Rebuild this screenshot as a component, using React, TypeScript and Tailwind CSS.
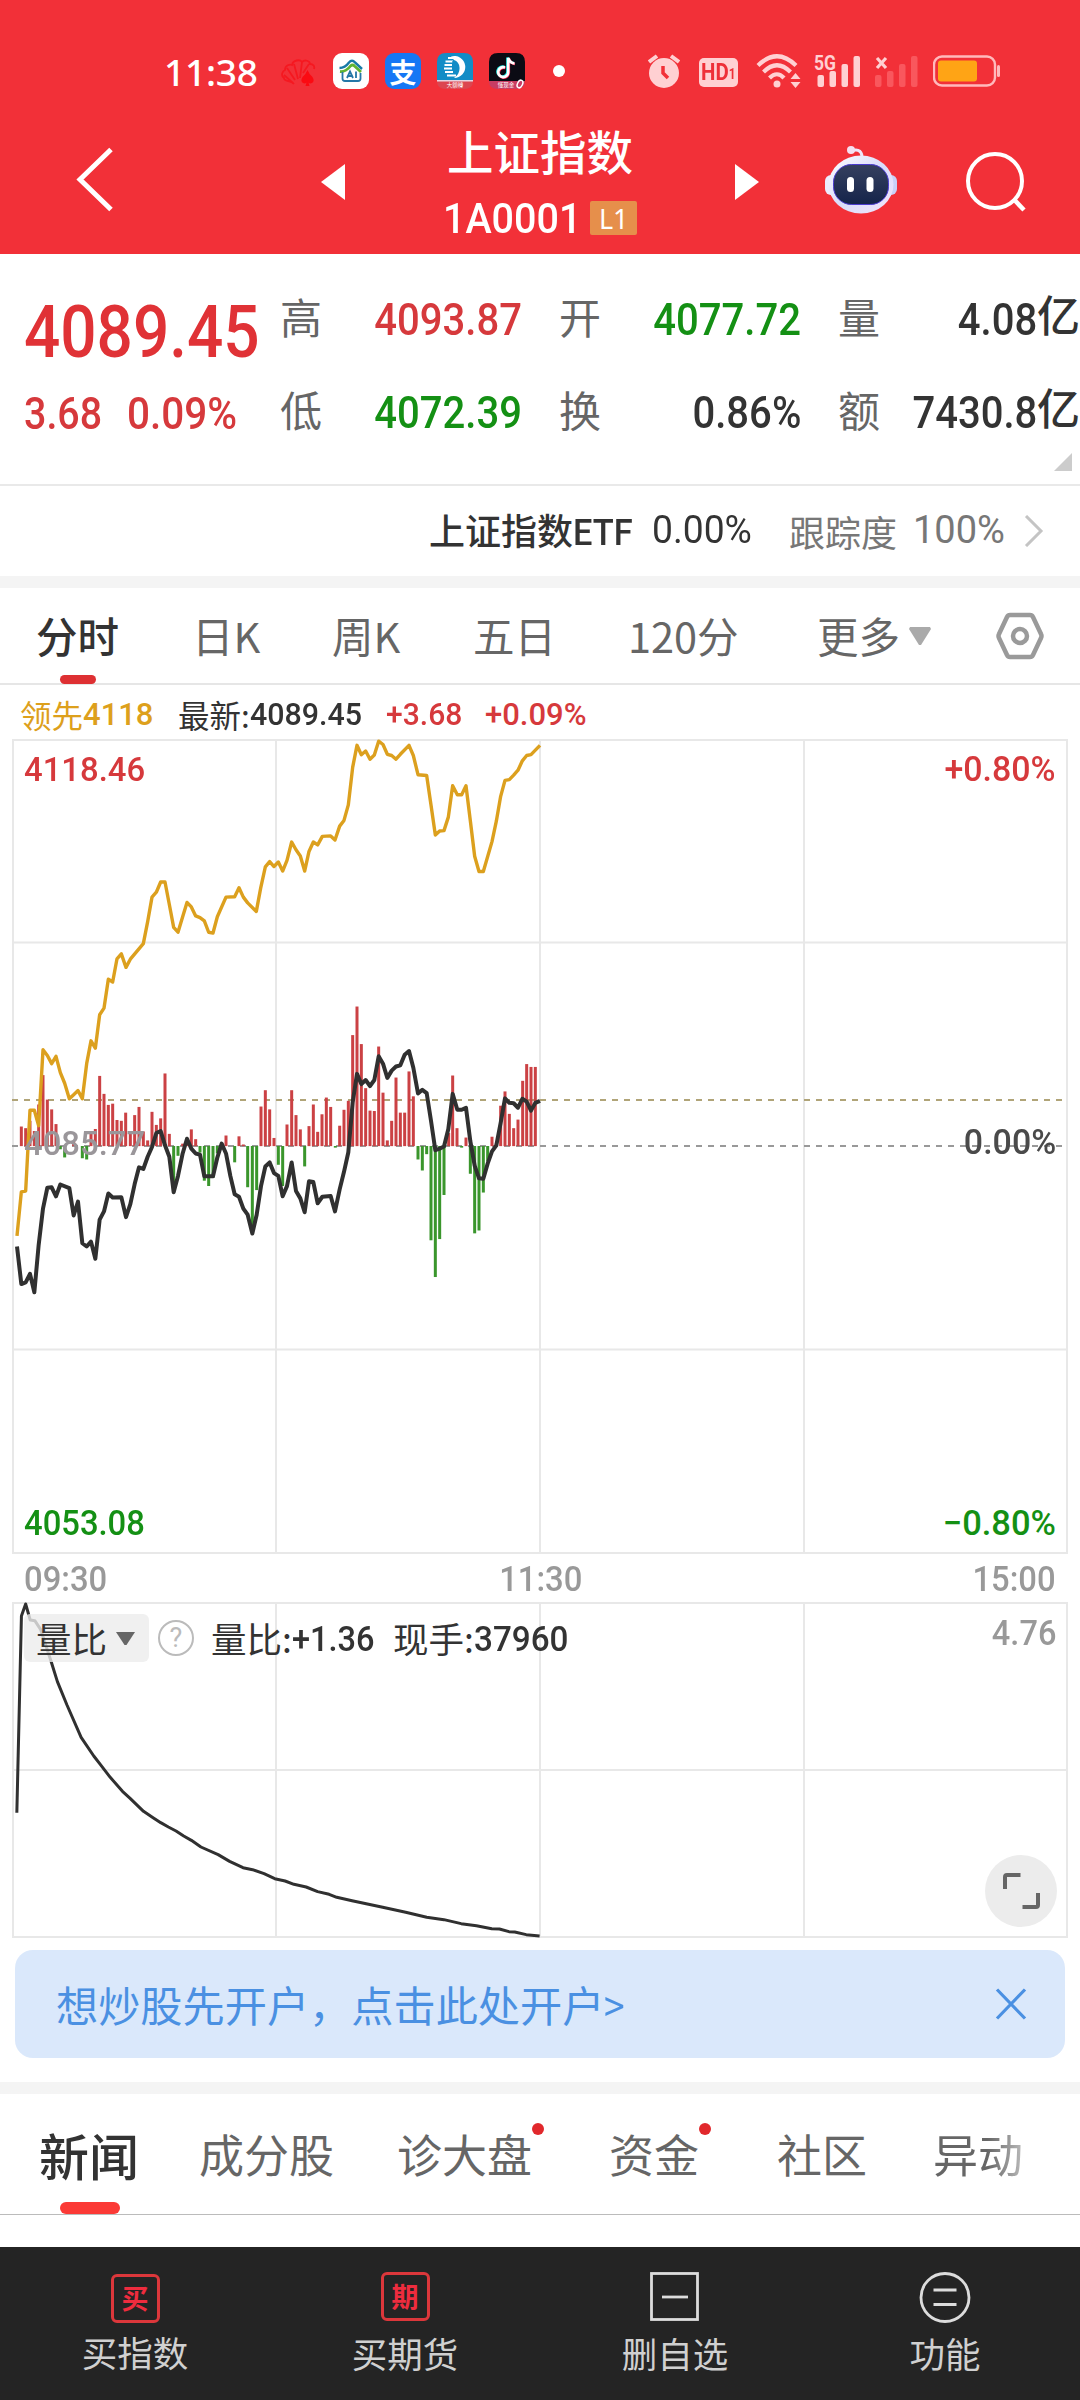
import React from "react";

const LEAD =
  "51,1362 64,1254 77,1252 90,1054 103,1054 116,1092 129,906 142,920 155,940 168,922 181,962 194,988 208,1026 221,1016 234,1006 247,1026 260,940 273,884 286,902 299,820 312,804 325,733 338,740 351,683 364,671 378,704 391,684 430,646 443,592 456,532 469,520 482,495 495,495 508,550 521,606 534,618 548,580 561,545 574,556 587,578 600,582 613,590 626,618 639,620 652,580 678,532 704,531 717,509 730,532 743,546 769,567 782,510 796,458 809,445 822,457 835,446 848,468 861,442 875,397 888,416 901,431 914,468 927,420 940,397 953,404 967,383 992,382 1005,392 1019,358 1032,344 1045,306 1058,214 1071,160 1084,183 1097,174 1110,194 1123,184 1136,150 1149,158 1162,182 1175,185 1188,194 1201,182 1227,160 1240,185 1254,232 1280,234 1293,306 1306,380 1319,370 1332,369 1345,336 1358,259 1372,281 1385,281 1398,259 1411,345 1424,432 1437,469 1450,469 1476,396 1489,346 1502,285 1515,246 1528,244 1541,233 1554,221 1567,198 1580,185 1593,183 1620,160";

const INDEX =
  "51,1388 64,1480 77,1476 90,1455 103,1500 116,1384 129,1295 142,1244 155,1243 168,1265 181,1236 208,1245 221,1312 234,1278 247,1380 260,1388 273,1376 286,1418 299,1322 312,1302 325,1258 338,1268 364,1267 378,1316 391,1284 404,1235 417,1194 430,1198 443,1168 456,1144 469,1110 482,1105 495,1140 508,1168 521,1255 534,1215 548,1160 561,1124 574,1148 587,1160 600,1163 613,1216 639,1216 652,1170 665,1136 678,1160 691,1215 704,1260 717,1266 730,1295 743,1310 757,1356 770,1310 783,1240 796,1192 809,1182 822,1208 835,1215 848,1265 861,1240 875,1182 888,1252 901,1270 914,1304 927,1228 940,1230 953,1282 967,1266 992,1264 1005,1302 1019,1248 1032,1205 1045,1157 1058,1035 1071,965 1084,990 1097,980 1110,995 1123,980 1136,922 1149,940 1162,975 1175,957 1188,947 1201,944 1214,918 1227,909 1240,950 1254,1013 1267,1004 1280,1012 1293,1080 1306,1152 1319,1148 1332,1143 1345,1100 1358,1014 1372,1053 1385,1053 1398,1048 1411,1130 1424,1190 1437,1221 1450,1222 1463,1185 1476,1155 1489,1140 1502,1085 1515,1025 1528,1036 1541,1037 1554,1048 1567,1026 1580,1033 1593,1055 1606,1036 1620,1031";

const BARS: [number, number][] = [
  [64, 1094], [77, 1098], [90, 1080], [103, 1105], [116, 1040], [129, 968], [142, 1028], [155, 1052], [168, 1088],
  [181, 1150], [194, 1170], [221, 1130], [247, 1172], [260, 1175], [273, 1105], [286, 1100], [299, 970], [312, 1014],
  [325, 1041], [338, 1038], [351, 1078], [364, 1080], [377, 1060], [391, 1105], [404, 1066], [417, 1046], [430, 1106],
  [443, 1128], [456, 1058], [469, 1090], [482, 1074], [495, 964], [508, 1112], [521, 1242], [534, 1166], [548, 1136],
  [561, 1124], [574, 1101], [587, 1125], [600, 1158], [613, 1227], [626, 1240], [639, 1220], [652, 1160], [665, 1136],
  [678, 1116], [704, 1182], [717, 1118], [730, 1138], [743, 1243], [757, 1340], [770, 1250], [783, 1045], [796, 1005],
  [809, 1052], [822, 1122], [835, 1188], [848, 1240], [861, 1089], [875, 1005], [888, 1066], [901, 1101], [914, 1192],
  [927, 1093], [940, 1040], [953, 1107], [966, 1064], [979, 1023], [992, 1046], [1006, 1146], [1019, 1092],
  [1032, 1053], [1045, 1031], [1058, 870], [1071, 800], [1084, 892], [1097, 1000], [1110, 1055], [1123, 1056],
  [1136, 898], [1149, 1011], [1162, 1128], [1175, 1080], [1188, 974], [1201, 1060], [1214, 1060], [1227, 959],
  [1240, 1020], [1254, 1175], [1267, 1202], [1280, 1162], [1293, 1373], [1306, 1463], [1319, 1370], [1332, 1262],
  [1346, 1110], [1358, 969], [1371, 1098], [1385, 1146], [1398, 1121], [1411, 1210], [1424, 1356], [1437, 1349],
  [1450, 1256], [1463, 1180], [1476, 1119], [1489, 1135], [1502, 1043], [1515, 1008], [1528, 1063], [1541, 1098],
  [1554, 1077], [1568, 982], [1580, 941], [1593, 948], [1606, 948],
];

/* Volume-ratio curve on a 2.613 x 3 sub-pixel grid. */
const RATIO =
  "44,938 56,348 67,312 79,360 91,362 106,388 134,486 150,545 175,615 212,712 245,768 262,793 288,832 320,874 340,895 375,934 400,953 420,968 440,981 460,993 480,1008 500,1021 525,1041 570,1064 600,1084 635,1103 660,1109 690,1121 718,1136 745,1143 768,1153 800,1161 830,1175 860,1183 880,1192 920,1202 1000,1222 1060,1237 1115,1252 1160,1259 1205,1271 1245,1277 1285,1286 1305,1287 1330,1295 1345,1296 1375,1304 1410,1308";

const NUM = "font-['Roboto','Noto_Sans_CJK_SC',sans-serif] font-medium leading-none whitespace-nowrap";

function StatusBar() {
  return (
    <div className="flex h-[112px] items-center pt-[30px]">
      <span className="ml-[164px] w-[117px] font-['Noto_Sans',sans-serif] text-[37px] font-medium leading-none tracking-[-0.2px] text-white">
        11:38
      </span>
      <svg className="mt-[4px] h-[30px] w-[36px]" viewBox="0 0 36 30" fill="none" stroke="#f51820" strokeWidth="1.800">
        <path d="M13 26C10 22 3 24 3 20C-1 17 2 13 4 12C4 7 9 6 11 7C12 2 19 1 21 4C24 1 29 3 29 6C32 6 34 8 33 11M12 25L3 17M14 22L6 10M17 21L13 6M19 20L21 4M22 15L28 6" />
        <path d="M26.500 12Q28 16 31.500 19Q34 23 31 25Q29 26 27.500 24.500L28.500 28H24.500L25.500 24.500Q24 26 22 25Q19 23 21.500 19Q25 16 26.500 12Z" fill="#fb0a12" stroke="none" />
      </svg>
      <svg className="ml-[16px] size-[36px]" viewBox="0 0 36 36">
        <rect width="36" height="36" rx="9" fill="#fff" />
        <path d="M6.500 15Q12 15 16 9.500Q19 6 22 9.500L29 16" fill="none" stroke="#1779a8" strokeWidth="2.400" />
        <path d="M7 18.500Q13 19 17.500 13Q19.500 11 21.500 13L28 19" fill="none" stroke="#5fb332" strokeWidth="2.800" />
        <path d="M9.500 19V25.500Q9.500 28 12 28H25Q27.500 28 27.500 25.500V20" fill="none" stroke="#2577a8" strokeWidth="1.800" />
        <path d="M14 25L17 18.500L20 25M15.500 23H19M23 18.500V25" fill="none" stroke="#2577a8" strokeWidth="1.800" />
      </svg>
      <span className="ml-[16px] flex size-[36px] items-center justify-center rounded-[9px] bg-[#1677f5] font-['Noto_Sans_CJK_SC',sans-serif] text-[27px] font-bold leading-none text-white">
        支
      </span>
      <svg className="ml-[16px] size-[36px]" viewBox="0 0 36 36">
        <path d="M0 28V9Q0 0 9 0H27Q36 0 36 9V28Z" fill="#128cc6" />
        <path d="M11 5H20M8.500 8.500H16M7.500 12H15M7 15.500H15M8 19H16M10 22.500H19" stroke="#fff" strokeWidth="1.900" />
        <path d="M14 3.500A11 11 0 1 1 17 25Q23 21 22.500 14.500Q22 8.500 17 7Z" fill="#fff" />
        <path d="M15 8Q22 9 21 20L17.500 20.500Z" fill="#128cc6" />
        <path d="M0 28H36Q36 36 27 36H9Q0 36 0 28Z" fill="#dc4650" />
        <rect y="27" width="36" height="1.500" fill="#e8d6e0" />
        <text x="18" y="33.500" textAnchor="middle" fill="#fff" fontSize="5.500" fontFamily="Noto Sans CJK SC">大額轉</text>
      </svg>
      <svg className="ml-[16px] size-[36px]" viewBox="0 0 36 36">
        <path d="M0 28V9Q0 0 9 0H27Q36 0 36 9V28Z" fill="#0b0b14" />
        <g fill="none" strokeWidth="2.600">
          <path d="M15.500 14A5 5 0 1 0 18.500 18.500V4.500Q20 9.500 25 10" stroke="#25f4ee" />
          <path d="M16.500 15A5 5 0 1 0 19.800 19.500V5.500Q21.500 10.500 26 11" stroke="#fe2c55" />
          <path d="M16 14.500A5 5 0 1 0 19.200 19V5Q20.800 10 25.500 10.500" stroke="#fff" />
        </g>
        <path d="M0 28H36Q36 36 27 36H9Q0 36 0 28Z" fill="#c83c63" />
        <text x="17" y="33.500" textAnchor="middle" fill="#fff" fontSize="5.500" fontFamily="Noto Sans CJK SC">懂现金</text>
        <ellipse cx="31" cy="31" rx="2.500" ry="4" fill="none" stroke="#fff" strokeWidth="1.500" transform="rotate(25 31 31)" />
      </svg>
      <span className="ml-[28px] size-[12px] rounded-full bg-white" />
      <svg className="ml-[83px] h-[36px] w-[32px]" viewBox="0 0 32 36">
        <circle cx="16" cy="20" r="15" fill="#ffd0d2" />
        <path d="M1 9L9 3M31 9L23 3" stroke="#ffd0d2" strokeWidth="4" />
        <path d="M15 13V20L20 25" fill="none" stroke="#f23038" strokeWidth="3.500" />
      </svg>
      <span className="ml-[19px] mt-[2px] flex h-[29px] w-[39px] items-center justify-center rounded-[5px] bg-[#ffd0d2] font-['Roboto',sans-serif] text-[#ee3038]">
        <span className="flex scale-x-[0.85] items-end text-[24px] font-bold leading-[20px]">
          HD<span className="text-[14px] leading-[15px]">1</span>
        </span>
      </span>
      <svg className="ml-[18px] h-[36px] w-[46px]" viewBox="0 0 46 36">
        <g fill="none" stroke="#ffd0d2" strokeWidth="4.200">
          <path d="M2 12.500Q21 -6 40 12.500" />
          <path d="M7.500 19Q21 5.500 34.500 19" />
          <path d="M13.500 25Q21 17.500 28 25" />
        </g>
        <circle cx="21" cy="31" r="3.500" fill="#ffd0d2" />
        <path d="M34.500 26L39.500 20L44.500 26ZM34.500 29L39.500 35L44.500 29Z" fill="#ffd0d2" />
      </svg>
      <svg className="ml-[12px] h-[36px] w-[48px]" viewBox="0 0 48 36" fill="#ffd0d2">
        <text x="0" y="17" fontSize="20" fontWeight="700" textLength="22" lengthAdjust="spacingAndGlyphs" fontFamily="Roboto">5G</text>
        <rect x="3.500" y="22" width="6.500" height="12" rx="2" />
        <rect x="15.500" y="18" width="6.500" height="16" rx="2" />
        <rect x="27.500" y="11" width="6.500" height="23" rx="2" />
        <rect x="39.500" y="3" width="6.500" height="31" rx="2" />
      </svg>
      <svg className="ml-[13px] h-[36px] w-[44px]" viewBox="0 0 44 36" fill="#f9575d">
        <path d="M2 5L11 15M11 5L2 15" stroke="#ffd0d2" strokeWidth="3.200" />
        <rect x="0" y="22" width="6.500" height="12" rx="2" />
        <rect x="12" y="18" width="6.500" height="16" rx="2" />
        <rect x="24" y="11" width="6.500" height="23" rx="2" />
        <rect x="36" y="3" width="6.500" height="31" rx="2" />
      </svg>
      <svg className="ml-[14px] h-[32px] w-[68px]" viewBox="0 0 68 32">
        <rect x="1" y="1.500" width="61" height="29" rx="8" fill="none" stroke="#ffb9bc" strokeWidth="2.400" />
        <rect x="5" y="5.500" width="39" height="21" rx="3" fill="#ffa415" />
        <rect x="64" y="10" width="3" height="12" rx="1.500" fill="#ffb9bc" />
      </svg>
    </div>
  );
}

function Header() {
  return (
    <header className="h-[254px] bg-[#f23038]">
      <StatusBar />
      <nav className="flex h-[142px] items-start">
        <svg className="ml-[74px] mt-[34px] h-[66px] w-[42px]" viewBox="0 0 42 66" fill="none" stroke="#fff" strokeWidth="5">
          <path d="M37 3.500L6 33.500L37 63.500" />
        </svg>
        <svg className="ml-[205px] mt-[52px] h-[36px] w-[24px]" viewBox="0 0 24 36"><path d="M0 18L24 0V36Z" fill="#fff" /></svg>
        <div className="ml-[85px] flex w-[220px] flex-col items-center">
          <h1 className="mt-[8px] h-[60px] whitespace-nowrap font-['Noto_Sans_CJK_SC',sans-serif] text-[46.500px] font-medium leading-[60px] text-white">
            上证指数
          </h1>
          <div className="mt-[18px] flex w-[194px] items-start">
            <span className="w-[149px]">
              <span className={`${NUM} inline-block origin-left scale-x-[0.94] text-[42px] text-white`}>1A0001</span>
            </span>
            <span className="mt-[3px] flex h-[34px] w-[47px] items-center justify-center rounded-[2px] bg-[#e68f4b] font-['Noto_Sans',sans-serif] text-[27px] leading-none text-white">
              L1
            </span>
          </div>
        </div>
        <svg className="ml-[85px] mt-[52px] h-[36px] w-[24px]" viewBox="0 0 24 36"><path d="M24 18L0 0V36Z" fill="#fff" /></svg>
        <svg className="ml-[65px] mt-[32px] h-[70px] w-[74px]" viewBox="0 0 74 70">
          <defs>
            <linearGradient id="shell" x1="0" y1="0" x2="1" y2="1">
              <stop offset="0" stopColor="#ffffff" />
              <stop offset=".5" stopColor="#d9dcfa" />
              <stop offset="1" stopColor="#f3e6fb" />
            </linearGradient>
            <linearGradient id="face" x1="0" y1="0" x2="0" y2="1">
              <stop offset="0" stopColor="#35405f" />
              <stop offset="1" stopColor="#15244a" />
            </linearGradient>
          </defs>
          <path d="M27 7Q39 3 38 16" fill="none" stroke="#efe6fa" strokeWidth="3" />
          <circle cx="27" cy="6" r="4" fill="#f5dff0" />
          <rect x="1" y="31" width="12" height="20" rx="6" fill="#ececfd" />
          <rect x="61" y="31" width="12" height="20" rx="6" fill="#c9d0f7" />
          <ellipse cx="37" cy="40.500" rx="32.500" ry="29" fill="url(#shell)" />
          <rect x="9.500" y="20.500" width="55" height="40" rx="18" fill="url(#face)" stroke="#4a3bd0" strokeWidth="1" />
          <rect x="23" y="33" width="7" height="15" rx="3.500" fill="#fff" />
          <rect x="42.500" y="33" width="7" height="15" rx="3.500" fill="#fff" />
        </svg>
        <svg className="ml-[67px] mt-[38px] h-[64px] w-[62px]" viewBox="0 0 62 64" fill="none" stroke="#fff" strokeWidth="4">
          <circle cx="30" cy="31" r="27" />
          <path d="M48.500 49L59 60" strokeWidth="4.500" />
        </svg>
      </nav>
    </header>
  );
}

function Pair({ label, children, tone }: { label: string; children: React.ReactNode; tone: string }) {
  return (
    <div className="flex h-[93px] items-center justify-between">
      <span className="mb-[3px] whitespace-nowrap text-[42px] leading-none text-[#666]">{label}</span>
      <span className={`${NUM} ${tone} flex items-center text-[45px]`}>{children}</span>
    </div>
  );
}

function Value({ children }: { children: React.ReactNode }) {
  return <span className="mt-[3px] inline-block origin-right scale-x-[0.89]">{children}</span>;
}

function Quote() {
  return (
    <section className="h-[232px] border-b-2 border-[#e9e9e9] pt-[17px]">
      <div className="grid grid-cols-[280px_242px_37px_242px_37px_242px]">
        <div className="pl-[24px]">
          <div className="flex h-[93px] items-center pt-[29px]">
            <span className={`${NUM} inline-block origin-left scale-x-[0.875] text-[73px] text-[#e03236]`}>4089.45</span>
          </div>
          <div className="flex h-[93px] items-center pt-[5px] text-[#d6393c]">
            <span className="w-[103px]">
              <span className={`${NUM} inline-block origin-left scale-x-[0.875] text-[45px]`}>3.68</span>
            </span>
            <span className={`${NUM} inline-block origin-left scale-x-[0.9] text-[45px]`}>0.09%</span>
          </div>
        </div>
        <div>
          <Pair label="高" tone="text-[#d6393c]"><Value>4093.87</Value></Pair>
          <Pair label="低" tone="text-[#149014]"><Value>4072.39</Value></Pair>
        </div>
        <div />
        <div>
          <Pair label="开" tone="text-[#149014]"><Value>4077.72</Value></Pair>
          <Pair label="换" tone="text-[#333]"><Value>0.86%</Value></Pair>
        </div>
        <div />
        <div>
          <Pair label="量" tone="text-[#333]"><Value>4.08</Value><span className="text-[43px]">亿</span></Pair>
          <Pair label="额" tone="text-[#333]"><Value>7430.8</Value><span className="text-[43px]">亿</span></Pair>
        </div>
      </div>
      <svg className="ml-auto mr-[8px] mt-[-4px] size-[18px]" viewBox="0 0 18 18"><path d="M18 0V18H0Z" fill="#ccc" /></svg>
    </section>
  );
}

function EtfRow() {
  return (
    <section className="flex h-[90px] items-center whitespace-nowrap text-[36px] leading-none">
      <span className="ml-[429px] flex w-[223px] items-baseline font-medium text-[#333]">
        上证指数
        <span className={`${NUM} inline-block origin-left scale-x-[0.93] text-[37px]`}>ETF</span>
      </span>
      <span className="w-[137px]">
        <span className={`${NUM} mb-[4px] inline-block origin-left scale-x-[0.98] text-[38px] !font-normal text-[#333]`}>0.00%</span>
      </span>
      <span className="w-[124px] text-[#777]">跟踪度</span>
      <span className="w-[111px]">
        <span className={`${NUM} mb-[4px] inline-block origin-left text-[38px] !font-normal text-[#777]`}>100%</span>
      </span>
      <svg className="h-[32px] w-[20px]" viewBox="0 0 20 32" fill="none" stroke="#c4c4c4" strokeWidth="3">
        <path d="M2 1L17 16L2 31" />
      </svg>
    </section>
  );
}

function PeriodTabs() {
  return (
    <section className="flex h-[97px] items-start whitespace-nowrap border-b-2 border-[#e6e6e6] text-[41.500px] leading-[60px] text-[#666]">
      <div className="ml-[36px] flex w-[156px] flex-col pt-[17px] font-medium text-[#333]">
        分时
        <span className="ml-[24px] mt-[10px] h-[9px] w-[36px] rounded-full bg-[#de3033]" />
      </div>
      <span className="w-[140px] pt-[17px]">日K</span>
      <span className="w-[141px] pt-[17px]">周K</span>
      <span className="w-[155px] pt-[17px]">五日</span>
      <span className="w-[189px] pt-[17px]">120分</span>
      <span className="w-[92px] pt-[17px]">更多</span>
      <svg className="mt-[39px] h-[19px] w-[22px]" viewBox="0 0 22 19"><path d="M1 0H21L22 2L12 18H10L0 2Z" fill="#aaa" /></svg>
      <svg className="ml-[65px] mt-[24px] h-[48px] w-[48px]" viewBox="0 0 48 48" fill="none" stroke="#9a9a9a" strokeWidth="4.500" strokeLinejoin="round">
        <path d="M14 3H34Q36 3 37 5L45 22Q46 24 45 26L37 43Q36 45 34 45H14Q12 45 11 43L3 26Q2 24 3 22L11 5Q12 3 14 3Z" />
        <circle cx="24" cy="24" r="7" strokeWidth="4.500" />
      </svg>
    </section>
  );
}

function LegendRow() {
  return (
    <div className="flex h-[54px] items-center whitespace-nowrap pt-[5px] text-[31.500px] leading-none">
      <span className="ml-[20px] flex w-[158px] items-center text-[#dda01c]">领先<span className={`${NUM} text-[31px]`}>4118</span></span>
      <span className="flex w-[208px] items-center text-[#333]">最新:<span className={`${NUM} origin-left scale-x-[0.98] text-[31px]`}>4089.45</span></span>
      <span className={`${NUM} w-[99px] origin-left scale-x-[0.97] text-[31px] text-[#d6393c]`}>+3.68</span>
      <span className={`${NUM} text-[31px] text-[#d6393c]`}>+0.09%</span>
    </div>
  );
}

function PriceChart() {
  return (
    <div className="relative h-[816px]">
      <svg className="block h-[816px] w-full" viewBox="0 739 1080 816">
        <g fill="none" stroke="#e8e8e8" strokeWidth="2">
          <rect x="13" y="740" width="1054" height="813" />
          <path d="M276 740V1553M540 740V1553M804 740V1553M13 942.500H1067M13 1349.500H1067" />
        </g>
        <path d="M12 1100H1064" stroke="#b0a478" strokeWidth="2" strokeDasharray="6 6" />
        <path d="M12 1146H1064" stroke="#999" strokeWidth="2" strokeDasharray="6 6" />
        {BARS.map(([x, y]) => (
          <rect
            key={x}
            x={x / 3 - 1.5}
            y={y < 1142 ? 680 + y / 2.45 : 1146}
            width={3}
            height={Math.max(1.5, Math.abs(y - 1142) / 2.45)}
            fill={y < 1142 ? "#cb4144" : "#3a962c"}
          />
        ))}
        <g fill="none" strokeLinejoin="round">
          <polyline points={LEAD} stroke="#dca01e" strokeWidth="3.400" vectorEffect="non-scaling-stroke" transform="translate(0 680) scale(.33333 .40816)" />
          <polyline points={INDEX} stroke="#303030" strokeWidth="4" vectorEffect="non-scaling-stroke" transform="translate(0 680) scale(.33333 .40816)" />
        </g>
      </svg>
      <span className={`${NUM} absolute left-[24px] top-[14px] origin-left scale-x-[0.98] text-[33.500px] text-[#d6393c]`}>4118.46</span>
      <span className={`${NUM} absolute right-[24px] top-[13px] origin-right text-[35px] text-[#d6393c]`}><span className="inline-block origin-right scale-x-[0.97]">+0.80%</span></span>
      <span className={`${NUM} absolute left-[24px] top-[388px] origin-left scale-x-[0.98] text-[33.500px] text-[#9a969a]`}>4085.77</span>
      <span className={`${NUM} absolute right-[24px] top-[386px] origin-right scale-x-[0.97] text-[35px] text-[#4a4a4a]`}>0.00%</span>
      <span className={`${NUM} absolute left-[24px] top-[767px] origin-left scale-x-[0.95] text-[34.500px] text-[#149014]`}>4053.08</span>
      <span className={`${NUM} absolute right-[24px] top-[767px] origin-right text-[34.500px] text-[#149014]`}>−0.80%</span>
    </div>
  );
}

function TimeAxis() {
  return (
    <div className={`${NUM} flex h-[46px] items-center justify-between pl-[24px] pr-[24px] pt-[2px] text-[34.500px] text-[#999]`}>
      <span className="origin-left scale-x-[0.95]">09:30</span>
      <span className="ml-[2px] scale-x-[0.95]">11:30</span>
      <span className="origin-right scale-x-[0.95]">15:00</span>
    </div>
  );
}

function RatioChart() {
  return (
    <div className="relative h-[338px]">
      <svg className="block h-[338px] w-full" viewBox="0 1601 1080 338">
        <g fill="none" stroke="#e8e8e8" strokeWidth="2">
          <rect x="13" y="1603" width="1054" height="334" />
          <path d="M276 1603V1937M540 1603V1937M804 1603V1937M13 1770H1067" />
        </g>
        <polyline points={RATIO} fill="none" stroke="#303030" strokeWidth="3" strokeLinejoin="round" vectorEffect="non-scaling-stroke" transform="translate(0 1500) scale(.3827 .33333)" />
      </svg>
      <div className="absolute left-[24px] top-[13px] flex h-[48px] items-center whitespace-nowrap text-[35.500px] leading-none text-[#333]">
        <div className="flex h-[48px] w-[125px] items-center rounded-[6px] bg-[#ececec]/80 pl-[12px]">
          量比
          <svg className="ml-[9px] h-[13px] w-[19px]" viewBox="0 0 19 13"><path d="M0 0H19L10.500 13H8.500Z" fill="#666" /></svg>
        </div>
        <span className="ml-[9px] flex size-[36px] items-center justify-center rounded-full border-[2.500px] border-[#bbb] font-['Roboto',sans-serif] text-[27px] text-[#bbb]">?</span>
        <span className="ml-[17px] flex w-[182px] items-center">量比:<span className={`${NUM} mt-[2px] origin-left scale-x-[0.93] text-[35px]`}>+1.36</span></span>
        <span className="flex items-center">现手:<span className={`${NUM} mt-[2px] origin-left scale-x-[0.95] text-[35px]`}>37960</span></span>
      </div>
      <span className={`${NUM} absolute right-[24px] top-[15px] origin-right scale-x-[0.93] text-[35px] text-[#999]`}>4.76</span>
      <span className="absolute left-[985px] top-[254px] flex size-[72px] items-center justify-center rounded-full bg-[#ececec]">
        <svg className="h-[36px] w-[37px]" viewBox="0 0 37 36" fill="none" stroke="#666" strokeWidth="4">
          <path d="M2 16V4Q2 2 4 2H17.500M35 20V32Q35 34 33 34H19.500" />
        </svg>
      </span>
    </div>
  );
}

function Banner() {
  return (
    <div className="mx-[15px] mt-[11px] flex h-[108px] items-center justify-between rounded-[18px] bg-[#dae8fb] pl-[41px] pr-[38px] text-[#4a90e2]">
      <span className="whitespace-nowrap text-[42.200px] leading-none">想炒股先开户，点击此处开户<span className="inline-block origin-left scale-x-[0.88]">&gt;</span></span>
      <svg className="h-[32px] w-[32px]" viewBox="0 0 32 32" fill="none" stroke="#4a90e2" strokeWidth="3.200"><path d="M2 1.500L30 30.500M30 1.500L2 30.500" /></svg>
    </div>
  );
}

function NewsTabs() {
  return (
    <section className="flex h-[121px] items-start whitespace-nowrap border-b border-[#bbb] text-[45px] leading-[72px] text-[#666]">
      <div className="ml-[39px] flex w-[160px] flex-col pt-[24px] text-[50px] font-medium text-[#333]">
        新闻
        <span className="ml-[21px] mt-[12px] h-[12px] w-[60px] rounded-full bg-[#fb3a36]" />
      </div>
      <span className="w-[198px] pt-[24px]">成分股</span>
      <span className="flex w-[212px] items-start pt-[24px]">
        诊大盘<i className="mt-[5px] size-[12px] rounded-full bg-[#e1282c]" />
      </span>
      <span className="flex w-[168px] items-start pt-[24px]">
        资金<i className="mt-[5px] size-[12px] rounded-full bg-[#e1282c]" />
      </span>
      <span className="w-[156px] pt-[24px]">社区</span>
      <span className="bg-gradient-to-r from-[#666] from-60% to-[#bbb] bg-clip-text pt-[24px] text-transparent">异动</span>
    </section>
  );
}

function BottomBar() {
  const label = "whitespace-nowrap text-[35.500px] leading-[48px] text-[#d0d0d0]";
  return (
    <footer className="mt-auto grid h-[153px] grid-cols-4 bg-[#242424]">
      <div className="flex flex-col items-center pt-[27px]">
        <span className="flex size-[49px] items-center justify-center rounded-[6px] border-[3px] border-[#dc373b] pb-[2px] text-[27px] font-bold leading-none text-[#ee2c3e]">买</span>
        <span className={`${label} mt-[5px]`}>买指数</span>
      </div>
      <div className="flex flex-col items-center pt-[25px]">
        <span className="flex size-[49px] items-center justify-center rounded-[6px] border-[3px] border-[#dc373b] pb-[2px] text-[27px] font-bold leading-none text-[#ee2c3e]">期</span>
        <span className={`${label} mt-[8px]`}>买期货</span>
      </div>
      <div className="flex flex-col items-center pt-[25px]">
        <svg className="mr-[2px] size-[49px]" viewBox="0 0 49 49" fill="none" stroke="#dcdcdc" strokeWidth="2.800"><rect x="1.500" y="1.500" width="46" height="46" /><path d="M12 25H38" /></svg>
        <span className={`${label} mt-[8px]`}>删自选</span>
      </div>
      <div className="flex flex-col items-center pt-[25px]">
        <svg className="h-[51px] w-[52px]" viewBox="0 0 52 51" fill="none" stroke="#dcdcdc" strokeWidth="2.800"><circle cx="26" cy="25.500" r="24" /><path d="M14.500 18H37.500M14.500 32.500H37.500" /></svg>
        <span className={`${label} mt-[6px]`}>功能</span>
      </div>
    </footer>
  );
}

export default function App() {
  return (
    <div className="flex h-[2400px] w-[1080px] flex-col bg-white font-['Noto_Sans_CJK_SC',sans-serif]">
      <Header />
      <Quote />
      <EtfRow />
      <div className="h-[12px] bg-[#f4f4f4]" />
      <PeriodTabs />
      <LegendRow />
      <PriceChart />
      <TimeAxis />
      <RatioChart />
      <Banner />
      <div className="mt-[24px] h-[12px] bg-[#f4f4f4]" />
      <NewsTabs />
      <BottomBar />
    </div>
  );
}
